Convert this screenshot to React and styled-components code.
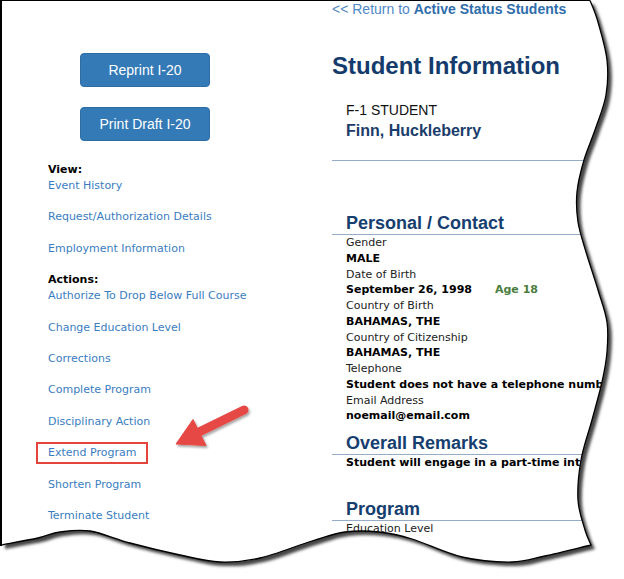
import React from "react";
import styled, { createGlobalStyle } from "styled-components";

const GlobalStyle = createGlobalStyle`
  html, body {
    margin: 0;
    padding: 0;
    background: #fff;
  }
`;

const Page = styled.div`
  position: relative;
  width: 624px;
  height: 579px;
  overflow: hidden;
  background: #fff;
  display: flex;
`;

const Sidebar = styled.aside`
  width: 332px;
  flex-shrink: 0;
  box-sizing: border-box;
  padding: 53px 0 0 48px;
  font-family: "DejaVu Sans", Verdana, sans-serif;
  font-size: 11px;
`;

const ButtonStack = styled.div`
  display: flex;
  flex-direction: column;
  gap: 20px;
  margin-left: 32px;
  margin-bottom: 21px;
`;

const ActionButton = styled.button`
  width: 130px;
  height: 34px;
  background: #337ab7;
  border: 1px solid #2e6da4;
  border-radius: 4px;
  color: #fff;
  font-family: "Liberation Sans", Arial, sans-serif;
  font-size: 14px;
  padding: 0;
  cursor: pointer;
`;

const GroupTitle = styled.div`
  font-weight: bold;
  color: #000;
  line-height: 16px;
`;

const LinkList = styled.div`
  display: flex;
  flex-direction: column;
  align-items: flex-start;
  gap: 15.4px;
  margin-bottom: 15.4px;
`;

const SideLink = styled.a`
  position: relative;
  display: inline-block;
  line-height: 16px;
  color: #3a7dbf;
  text-decoration: none;
  white-space: nowrap;

  ${(p) =>
    p.$marked &&
    `
    &::after {
      content: "";
      position: absolute;
      left: -12px;
      right: -12px;
      top: -3px;
      bottom: -3px;
      border: 2px solid #e5443d;
    }
  `}
`;

const Arrow = styled.svg`
  position: absolute;
  left: 168px;
  top: 400px;
  overflow: visible;
`;

const Main = styled.main`
  flex: 1;
  min-width: 0;
  padding-top: 1px;
  display: flex;
  flex-direction: column;
  white-space: nowrap;
`;

const ReturnLink = styled.a`
  font-family: "Liberation Sans", Arial, sans-serif;
  font-size: 14px;
  line-height: 16px;
  color: #4f88c6;
  text-decoration: none;

  b {
    color: #2f6dab;
  }
`;

const Title = styled.h1`
  margin: 35px 0 0;
  font-family: "Liberation Sans", Arial, sans-serif;
  font-size: 24px;
  line-height: 28px;
  font-weight: bold;
  color: #143b6c;
`;

const StudentBlock = styled.div`
  margin-top: 22px;
  padding-left: 14px;
  font-family: "Liberation Sans", Arial, sans-serif;
`;

const StudentType = styled.div`
  font-size: 14px;
  line-height: 16px;
  color: #111;
`;

const StudentName = styled.div`
  margin-top: 3px;
  font-size: 16px;
  line-height: 20px;
  font-weight: bold;
  color: #1b3c6b;
`;

const Divider = styled.hr`
  margin: ${(p) => p.$top}px 0 0;
  border: none;
  border-top: 1px solid #95abc8;
  width: 100%;
`;

const SectionTitle = styled.h2`
  margin: ${(p) => p.$top}px 0 0;
  padding-left: 14px;
  font-family: "Liberation Sans", Arial, sans-serif;
  font-size: 18px;
  line-height: 22px;
  font-weight: bold;
  color: #163e6f;
  border-bottom: 1px solid #95abc8;
`;

const Fields = styled.div`
  padding-left: 14px;
  font-family: "DejaVu Sans", Verdana, sans-serif;
  font-size: 11px;
  line-height: 15.75px;
`;

const Label = styled.div`
  color: #222;
`;

const Value = styled.div`
  font-weight: bold;
  color: #000;
`;

const Age = styled.span`
  margin-left: 23px;
  color: #4a7d3e;
`;

const EdgeOverlay = styled.svg`
  position: absolute;
  left: 0;
  top: 0;
  pointer-events: none;
`;

const smooth = (pts) => {
  let d = "";
  for (let i = 0; i < pts.length - 1; i++) {
    const p0 = pts[i - 1] || pts[i];
    const p1 = pts[i];
    const p2 = pts[i + 1];
    const p3 = pts[i + 2] || p2;
    const c1 = [p1[0] + (p2[0] - p0[0]) / 6, p1[1] + (p2[1] - p0[1]) / 6];
    const c2 = [p2[0] - (p3[0] - p1[0]) / 6, p2[1] - (p3[1] - p1[1]) / 6];
    d += ` C${c1[0].toFixed(1)},${c1[1].toFixed(1)} ${c2[0].toFixed(1)},${c2[1].toFixed(1)} ${p2[0]},${p2[1]}`;
  }
  return d;
};

const rightEdge = [
  [590, 0], [598, 22], [607, 60], [606, 95], [595, 130], [584, 160],
  [577, 192], [578, 222], [586, 252], [598, 290], [607, 322], [607, 352],
  [602, 382], [592, 420], [581, 460], [578, 500], [585, 530], [591, 545],
];

const bottomEdge = [
  [591, 545], [545, 556], [512, 562], [462, 557], [412, 539], [379, 532],
  [345, 532], [312, 541], [260, 558], [220, 562], [180, 555], [130, 543],
  [90, 531], [60, 532], [38, 538], [1, 545],
];

const edgeD = `M590,0.5 L590,0.5${smooth(rightEdge)}${smooth(bottomEdge)}`;
const paperD = `M1,0.5 L590,0.5${smooth(rightEdge)}${smooth(bottomEdge)} L1,545 Z`;
const outsideD = `M-10,-10 H634 V589 H-10 Z ${paperD}`;

const TornEdge = () => (
  <EdgeOverlay width="624" height="579" viewBox="0 0 624 579">
    <defs>
      <clipPath id="outside">
        <path d={outsideD} clipRule="evenodd" />
      </clipPath>
      <filter id="soft" x="-10%" y="-10%" width="120%" height="120%">
        <feGaussianBlur stdDeviation="1.6" />
      </filter>
    </defs>
    <path d={outsideD} fill="#fff" fillRule="evenodd" />
    <g clipPath="url(#outside)">
      <path d={paperD} transform="translate(4 4)" fill="#444" filter="url(#soft)" />
    </g>
    <path d={edgeD} fill="none" stroke="#000" strokeWidth="1.3" />
    <rect x="0" y="0" width="2" height="546" fill="#000" />
    <rect x="0" y="0" width="590" height="1" fill="#000" />
  </EdgeOverlay>
);

const viewLinks = ["Event History", "Request/Authorization Details", "Employment Information"];
const actionLinks = [
  "Authorize To Drop Below Full Course",
  "Change Education Level",
  "Corrections",
  "Complete Program",
  "Disciplinary Action",
  "Extend Program",
  "Shorten Program",
  "Terminate Student",
];

const personal = [
  ["Gender", "MALE"],
  ["Date of Birth", "September 26, 1998", "Age 18"],
  ["Country of Birth", "BAHAMAS, THE"],
  ["Country of Citizenship", "BAHAMAS, THE"],
  ["Telephone", "Student does not have a telephone number"],
  ["Email Address", "noemail@email.com"],
];

const App = () => {
  return (
    <Page>
      <GlobalStyle />
      <Sidebar>
        <ButtonStack>
          <ActionButton>Reprint I-20</ActionButton>
          <ActionButton>Print Draft I-20</ActionButton>
        </ButtonStack>
        <GroupTitle>View:</GroupTitle>
        <LinkList>
          {viewLinks.map((l) => (
            <SideLink key={l} href="#">{l}</SideLink>
          ))}
        </LinkList>
        <GroupTitle>Actions:</GroupTitle>
        <LinkList>
          {actionLinks.map((l) => (
            <SideLink key={l} href="#" $marked={l === "Extend Program"}>{l}</SideLink>
          ))}
        </LinkList>
      </Sidebar>

      <Arrow width="90" height="60" viewBox="168 400 90 60">
        <defs>
          <filter id="arrowShadow" x="-20%" y="-20%" width="140%" height="140%">
            <feDropShadow dx="1.5" dy="2" stdDeviation="1.2" floodColor="#000" floodOpacity="0.35" />
          </filter>
        </defs>
        <g filter="url(#arrowShadow)" fill="#e64a45" stroke="#e64a45">
          <line x1="244" y1="410" x2="199" y2="432" strokeWidth="9" strokeLinecap="round" />
          <polygon points="176,444 193,419.5 206,445.5" strokeWidth="1" strokeLinejoin="round" />
        </g>
      </Arrow>

      <Main>
        <ReturnLink href="#">
          &lt;&lt; Return to <b>Active Status Students</b>
        </ReturnLink>
        <Title>Student Information</Title>
        <StudentBlock>
          <StudentType>F-1 STUDENT</StudentType>
          <StudentName>Finn, Huckleberry</StudentName>
        </StudentBlock>
        <Divider $top={19} />

        <SectionTitle $top={51}>Personal / Contact</SectionTitle>
        <Fields>
          {personal.map(([label, value, extra]) => (
            <React.Fragment key={label}>
              <Label>{label}</Label>
              <Value>
                {value}
                {extra && <Age>{extra}</Age>}
              </Value>
            </React.Fragment>
          ))}
        </Fields>

        <SectionTitle $top={8}>Overall Remarks</SectionTitle>
        <Fields>
          <Value>Student will engage in a part-time internship</Value>
        </Fields>

        <SectionTitle $top={27}>Program</SectionTitle>
        <Fields>
          <Label>Education Level</Label>
          <Value>MASTER'S</Value>
        </Fields>
      </Main>

      <TornEdge />
    </Page>
  );
};

export default App;
